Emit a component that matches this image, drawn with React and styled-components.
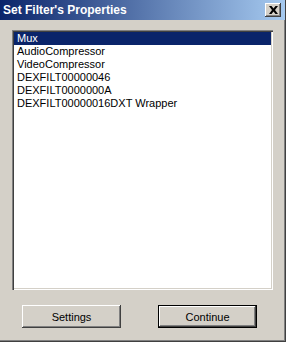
import React, { useState } from 'react';
import styled, { createGlobalStyle } from 'styled-components';

const GlobalStyle = createGlobalStyle`
  html, body {
    margin: 0;
    padding: 0;
    background: #d4d0c8;
  }
  * {
    box-sizing: border-box;
  }
`;

const filters = [
  'Mux',
  'AudioCompressor',
  'VideoCompressor',
  'DEXFILT00000046',
  'DEXFILT0000000A',
  'DEXFILT00000016DXT Wrapper',
];

function App() {
  const [selected, setSelected] = useState(0);

  return (
    <>
      <GlobalStyle />
      <Window>
        <TitleBar>
          <Title>Set Filter's Properties</Title>
          <CloseButton aria-label="Close">
            <svg width="9" height="8" viewBox="0 0 9 8">
              <path d="M0 0h2.5l2 2.5 2-2.5H9L6 4l3 4H6.5l-2-2.5-2 2.5H0l3-4z" fill="#000" />
            </svg>
          </CloseButton>
        </TitleBar>
        <Body>
          <ListBox>
            {filters.map((name, i) => (
              <ListItem key={name} $selected={i === selected} onClick={() => setSelected(i)}>
                {name}
              </ListItem>
            ))}
          </ListBox>
          <ButtonRow>
            <Button>Settings</Button>
            <Button $default>Continue</Button>
          </ButtonRow>
        </Body>
      </Window>
    </>
  );
}

export default App;

const Window = styled.div`
width: 286px;
height: 342px;
background: #d4d0c8;
border-right: 1px solid #404040;
border-bottom: 1px solid #404040;
box-shadow: inset -1px -1px 0 #808080;
display: flex;
flex-direction: column;
font-family: "Liberation Sans", Arial, sans-serif;
`

const TitleBar = styled.div`
height: 20px;
background: linear-gradient(to right, #0a246a, #a6caf0);
display: flex;
align-items: center;
justify-content: space-between;
padding: 0 4px 0 3px;
`

const Title = styled.span`
color: #fff;
font-weight: bold;
font-size: 12px;
`

const CloseButton = styled.button`
width: 16px;
height: 14px;
padding: 0;
margin: 0;
background: #d4d0c8;
border: none;
box-shadow: inset -1px -1px 0 #404040, inset 1px 1px 0 #fff, inset -2px -2px 0 #808080;
display: flex;
align-items: center;
justify-content: center;
`

const Body = styled.div`
flex: 1;
display: flex;
flex-direction: column;
padding: 10px 12px 0 12px;
`

const ListBox = styled.div`
width: 261px;
height: 260px;
background: #fff;
padding: 2px;
box-shadow: inset 1px 1px 0 #808080, inset 2px 2px 0 #404040, inset -1px -1px 0 #fff, inset -2px -2px 0 #d4d0c8;
`

const ListItem = styled.div`
height: 13px;
line-height: 13px;
font-size: 11px;
padding-left: 3px;
color: ${p => (p.$selected ? '#fff' : '#000')};
background: ${p => (p.$selected ? '#0a246a' : 'transparent')};
white-space: nowrap;
`

const ButtonRow = styled.div`
display: flex;
gap: 37px;
padding: 15px 0 0 10px;
`

const Button = styled.button`
width: 99px;
height: 23px;
padding: 0;
margin: 0;
font-family: "Liberation Sans", Arial, sans-serif;
font-size: 11px;
color: #000;
background: #d4d0c8;
border: ${p => (p.$default ? '1px solid #000' : 'none')};
box-shadow: inset -1px -1px 0 #404040, inset 1px 1px 0 #fff, inset -2px -2px 0 #808080;
`
